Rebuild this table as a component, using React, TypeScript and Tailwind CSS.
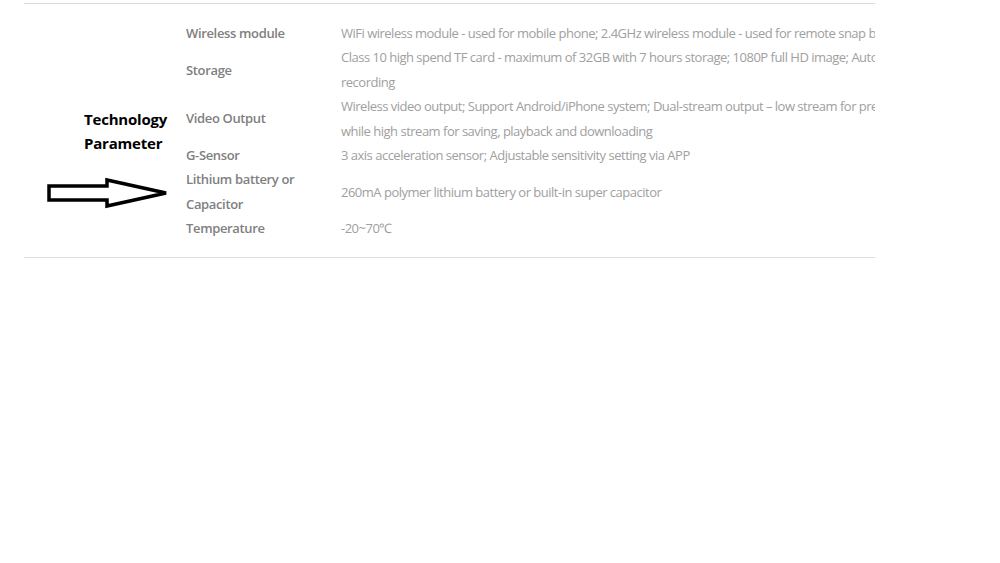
import React from 'react';

const specs: { label: string[]; value: string[] }[] = [
  { label: ['Wireless module'], value: ['WiFi wireless module - used for mobile phone; 2.4GHz wireless module - used for remote snap button'] },
  { label: ['Storage'], value: ['Class 10 high spend TF card - maximum of 32GB with 7 hours storage; 1080P full HD image; Auto loop', 'recording'] },
  { label: ['Video Output'], value: ['Wireless video output; Support Android/iPhone system; Dual-stream output – low stream for preview', 'while high stream for saving, playback and downloading'] },
  { label: ['G-Sensor'], value: ['3 axis acceleration sensor; Adjustable sensitivity setting via APP'] },
  { label: ['Lithium battery or', 'Capacitor'], value: ['260mA polymer lithium battery or built-in super capacitor'] },
  { label: ['Temperature'], value: ['-20~70℃'] },
];

const Arrow = () => (
  <svg className="absolute left-[21px] top-[151px]" width="130" height="40" viewBox="45 172 130 40">
    <polygon
      points="49,186 107,186 107,180 166,193 107,206 107,200 49,200"
      fill="white"
      stroke="black"
      strokeWidth="3.5"
      strokeLinejoin="miter"
    />
  </svg>
);

export default function App() {
  return (
    <div className="min-h-[563px] bg-white pt-[3px] font-['Open_Sans',sans-serif]">
      <div className="ml-[24px] w-[851px] overflow-hidden border-y border-[#dcdcdc] pt-[17px] pb-[16px]">
        <div className="relative flex">
          <div className="flex w-[162px] shrink-0 items-center pl-[60px] text-[15px] font-bold leading-[24px] tracking-[-0.2px] text-black">
            <div>
              Technology
              <br />
              Parameter
            </div>
          </div>
          {/* spec rows */}
          <div className="flex flex-col text-[13px] leading-[24.4px]">
            {specs.map((s, i) => {
              const lines = Math.max(s.label.length, s.value.length);
              return (
                <div key={i} className="flex" style={{ height: lines * 24.4 }}>
                  <div className="flex w-[155px] shrink-0 flex-col justify-center font-semibold tracking-[-0.35px] text-[#808080]">
                    {s.label.map((l) => (
                      <span key={l} className="whitespace-nowrap">{l}</span>
                    ))}
                  </div>
                  <div className="flex flex-col justify-center tracking-[-0.5px] text-[#a0a0a0]">
                    {s.value.map((v) => (
                      <span key={v} className="whitespace-nowrap">{v}</span>
                    ))}
                  </div>
                </div>
              );
            })}
          </div>
          <Arrow />
        </div>
      </div>
    </div>
  );
}
